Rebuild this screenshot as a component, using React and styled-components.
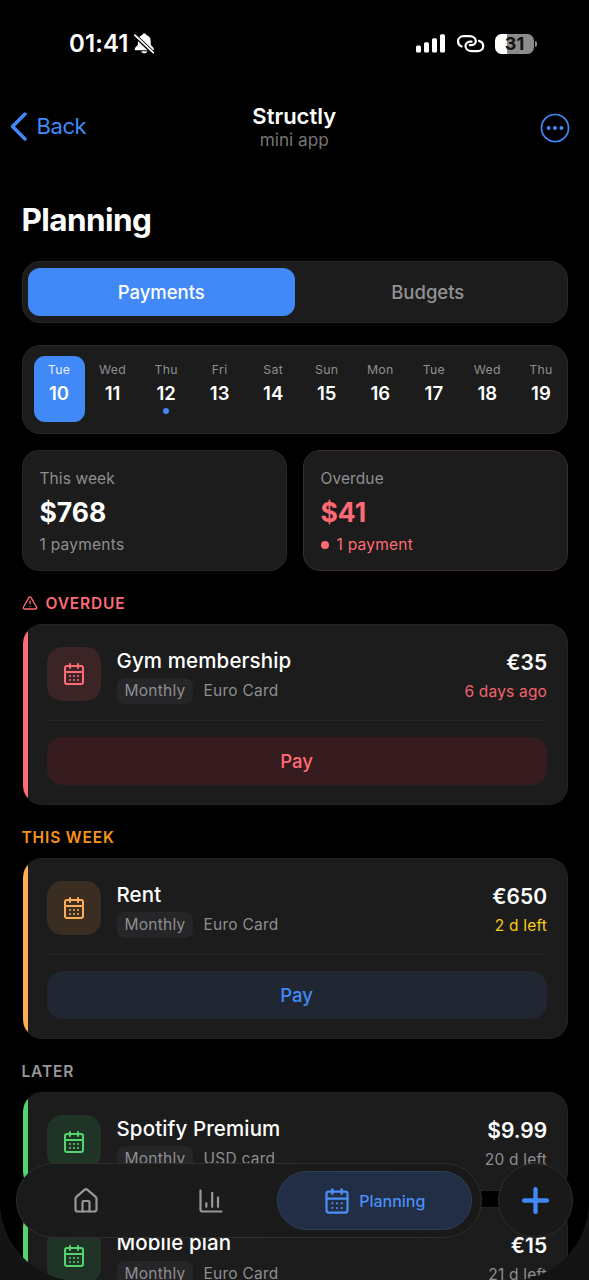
import React from 'react'
import styled, { createGlobalStyle } from 'styled-components'
import { CalendarDays, ChartColumn, House, Plus, TriangleAlert } from 'lucide-react'

const days = [
  { name: 'Tue', num: 10, active: true },
  { name: 'Wed', num: 11 },
  { name: 'Thu', num: 12, dot: true },
  { name: 'Fri', num: 13 },
  { name: 'Sat', num: 14 },
  { name: 'Sun', num: 15 },
  { name: 'Mon', num: 16 },
  { name: 'Tue', num: 17 },
  { name: 'Wed', num: 18 },
  { name: 'Thu', num: 19 },
]

const red = '#ff6b74'
const orange = '#ffad55'
const green = '#55d36d'
const blue = '#4189f7'

function Payment({ name, card, amount, due, color, tile, dueColor, pay, payBg }) {
  return (
    <Card $color={color}>
      <CardTop $short={!!pay}>
        <Tile $bg={tile} $color={color}>
          <CalendarDays size={24} strokeWidth={2} />
        </Tile>
        <Info>
          <Name>{name}</Name>
          <Meta>
            <Badge>Monthly</Badge>
            <CardName>{card}</CardName>
          </Meta>
        </Info>
        <Right>
          <Amount>{amount}</Amount>
          <Due $color={dueColor}>{due}</Due>
        </Right>
      </CardTop>
      {pay && (
        <CardBottom>
          <PayButton $color={pay} $bg={payBg}>Pay</PayButton>
        </CardBottom>
      )}
    </Card>
  )
}

function StatusBar() {
  return (
    <Status>
      <Clock>
        <Time>01:41</Time>
        <svg width="21" height="21" viewBox="0 0 21 21">
          <path d="M10.300 .4c-1.100 0-1.900.7-2.100 1.600C5.400 2.900 3.900 5.100 3.900 8v3.200c0 1.500-3.200 3-3.200 5 0 .7.4 1 1.100 1h17c.7 0 1.100-.3 1.100-1 0-2-3.200-3.500-3.200-5V8c0-2.900-1.500-5.100-4.300-6-.2-.9-1-1.600-2.100-1.600z" fill="#fff" />
          <path d="M7.300 18.200h6c-.3 1.300-1.400 2.100-3 2.100S7.600 19.500 7.300 18.200z" fill="#fff" />
          <path d="M0 1.600L19.400 20.200" stroke="#000" strokeWidth="4" />
          <path d="M.9 2.200L19.300 19.700" stroke="#fff" strokeWidth="1.800" strokeLinecap="round" />
        </svg>
      </Clock>
      <StatusRight>
        <svg width="30" height="19" viewBox="0 0 30 19" fill="#fff">
          <rect x="0" y="11.500" width="5" height="7" rx="1.500" />
          <rect x="8" y="8.300" width="5" height="10.200" rx="1.500" />
          <rect x="16" y="4.300" width="5" height="14.200" rx="1.500" />
          <rect x="24" y=".3" width="5" height="18.200" rx="1.500" />
        </svg>
        <svg width="28" height="19" viewBox="0 0 28 19" fill="none" stroke="#fff" strokeWidth="2.200" strokeLinecap="round">
          <path d="M4.600 12.400C2.300 11.500 1 9.700 1 7.500 1 4.400 3.400 2.200 6.600 2.200h5.900c3.700 0 6.300 2.200 6.300 4.900 0 2.400-1.900 4.100-4.200 4.100h-1.800" />
          <path d="M22 6.900c2.700.8 4.200 2.800 4.200 5 0 3.200-2.400 5.200-5.500 5.200h-5.900c-3.600 0-6.300-2.100-6.300-5 0-2.500 2-4.400 4.500-4.400h1.600" />
        </svg>
        <Battery>
          <BatteryBody>31</BatteryBody>
          <BatteryTip />
        </Battery>
      </StatusRight>
    </Status>
  )
}

function App() {
  return (
    <Screen>
      <GlobalStyle />
      <StatusBar />

      <Header>
        <Back>
          <svg width="18" height="29" viewBox="0 0 18 29" fill="none" stroke={blue} strokeWidth="3.500" strokeLinecap="round" strokeLinejoin="round">
            <path d="M15 2L2.500 14.500 15 27" />
          </svg>
          Back
        </Back>
        <HeaderTitle>
          <AppName>Structly</AppName>
          <AppSub>mini app</AppSub>
        </HeaderTitle>
        <More>
          <svg width="30" height="30" viewBox="0 0 30 30" fill={blue}>
            <circle cx="15" cy="15" r="13.500" fill="none" stroke={blue} strokeWidth="1.700" />
            <circle cx="8.600" cy="15" r="2" />
            <circle cx="15" cy="15" r="2" />
            <circle cx="21.400" cy="15" r="2" />
          </svg>
        </More>
      </Header>

      <Content>
        <Title>Planning</Title>

        <Tabs>
          <Tab $active>Payments</Tab>
          <Tab>Budgets</Tab>
        </Tabs>

        <Strip>
          {days.map((d) => (
            <Day key={d.num} $active={d.active}>
              <DayName $active={d.active}>{d.name}</DayName>
              <DayNum>{d.num}</DayNum>
              {d.dot && <DayDot />}
            </Day>
          ))}
        </Strip>

        <Summary>
          <Box>
            <BoxLabel>This week</BoxLabel>
            <BoxValue>$768</BoxValue>
            <BoxNote>1 payments</BoxNote>
          </Box>
          <Box $danger>
            <BoxLabel>Overdue</BoxLabel>
            <BoxValue $danger>$41</BoxValue>
            <BoxNote $danger><Dot />1 payment</BoxNote>
          </Box>
        </Summary>

        <Section $color={red}>
          <TriangleAlert size={16} strokeWidth={2} />
          OVERDUE
        </Section>
        <Payment name="Gym membership" card="Euro Card" amount="€35" due="6 days ago"
          color={red} tile="#3a2425" dueColor="#f5626c" pay={red} payBg="#371c1f" />

        <Section $color="#f7931e">THIS WEEK</Section>
        <Payment name="Rent" card="Euro Card" amount="€650" due="2 d left"
          color={orange} tile="#3a2d22" dueColor="#f9cc16" pay={blue} payBg="#202733" />

        <Section $color="#98989b">LATER</Section>
        <List>
          <Payment name="Spotify Premium" card="USD card" amount="$9.99" due="20 d left"
            color={green} tile="#203327" dueColor="#8e8e90" />
          <Payment name="Mobile plan" card="Euro Card" amount="€15" due="21 d left"
            color={green} tile="#203327" dueColor="#8e8e90" />
        </List>
      </Content>

      <Corners>
        <svg width="589" height="80" viewBox="0 0 589 80" fill="#141414">
          <path d="M0 2A80 80 0 0 0 66 80H0z" />
          <path d="M589 2A80 80 0 0 1 523 80H589z" />
        </svg>
      </Corners>

      <BottomBar>
        <Nav>
          <NavItem><House size={28} strokeWidth={1.9} /></NavItem>
          <NavItem><ChartColumn size={28} strokeWidth={1.9} /></NavItem>
          <NavItem $active>
            <CalendarDays size={28} strokeWidth={1.9} />
            Planning
          </NavItem>
        </Nav>
        <Fab><Plus size={39} strokeWidth={2.700} /></Fab>
      </BottomBar>
    </Screen>
  )
}

export default App


const GlobalStyle = createGlobalStyle`
* {
  box-sizing: border-box;
}

body {
  margin: 0;
  background: #000;
  font-family: Inter, "Liberation Sans", sans-serif;
}

button {
  border: 0;
  padding: 0;
  background: none;
  font-family: inherit;
}
`

const Screen = styled.div`
position: relative;
width: 589px;
height: 1280px;
overflow: hidden;
background: #000;
color: #fff;
white-space: nowrap;
`

const Status = styled.div`
height: 88px;
padding: 0 52px 1px 69px;
display: flex;
align-items: center;
justify-content: space-between;
`

const Clock = styled.div`
display: flex;
align-items: center;
gap: 4px;
`

const Time = styled.div`
width: 60.5px;
font-size: 24px;
font-weight: 600;
letter-spacing: 0.1px;
`

const StatusRight = styled.div`
display: flex;
align-items: center;
gap: 10.5px;
`

const Battery = styled.div`
display: flex;
align-items: center;
gap: 1px;
`

const BatteryBody = styled.div`
width: 39px;
height: 20px;
border-radius: 6.5px;
background: linear-gradient(to right, #fff 12px, #8b8b8b 12px);
color: #111;
font-size: 18px;
font-weight: 700;
line-height: 20.5px;
text-align: center;
`

const BatteryTip = styled.div`
width: 2px;
height: 6px;
border-radius: 0 3px 3px 0;
background: #8b8b8b;
`

const Header = styled.div`
height: 88px;
padding: 0 19px 12px 10px;
display: grid;
grid-template-columns: 1fr auto 1fr;
align-items: center;
`

const Back = styled.button`
display: flex;
align-items: center;
gap: 8.5px;
color: ${blue};
font-size: 22px;
letter-spacing: -0.4px;
`

const HeaderTitle = styled.div`
padding: 3px 0 0 8.5px;
text-align: center;
`

const AppName = styled.div`
font-size: 22px;
font-weight: 600;
line-height: 25px;
`

const AppSub = styled.div`
color: #757575;
font-size: 17.2px;
line-height: 22px;
`

const More = styled.button`
justify-self: end;
height: 30px;
padding-top: 2px;
`

const Content = styled.div`
padding: 0 21.5px;
`

const Title = styled.h1`
margin: 0;
height: 85px;
padding-top: 24px;
font-size: 31.5px;
font-weight: 700;
line-height: 40px;
letter-spacing: -0.6px;
`

const Tabs = styled.div`
height: 62px;
padding: 6px 5.5px;
display: grid;
grid-template-columns: 1fr 1fr;
border: 1px solid #282829;
border-radius: 18px;
background: #1c1c1c;
`

const Tab = styled.button`
border-radius: 12px;
background: ${(p) => (p.$active ? blue : 'transparent')};
color: ${(p) => (p.$active ? '#fff' : '#929294')};
font-size: 18.5px;
font-weight: 500;
`

const Strip = styled.div`
height: 89px;
margin-top: 22px;
padding: 10px 11px;
display: flex;
gap: 2.55px;
overflow: hidden;
border: 1px solid #282829;
border-radius: 18px;
background: #1c1c1c;
`

const Day = styled.div`
flex: 0 0 51px;
height: 66px;
padding-top: 6px;
display: flex;
flex-direction: column;
align-items: center;
border-radius: 11px;
background: ${(p) => (p.$active ? blue : 'transparent')};
`

const DayName = styled.div`
color: ${(p) => (p.$active ? '#e6effe' : '#8e8e90')};
font-size: 12.3px;
line-height: 16px;
letter-spacing: 0.3px;
`

const DayNum = styled.div`
margin-top: 3px;
font-size: 18.5px;
font-weight: 600;
line-height: 24px;
`

const DayDot = styled.div`
width: 6px;
height: 6px;
margin-top: 3px;
border-radius: 50%;
background: ${blue};
`

const Summary = styled.div`
margin-top: 16px;
display: grid;
grid-template-columns: 1fr 1fr;
gap: 16px;
`

const Box = styled.div`
height: 121px;
padding: 18px 17px 0;
border: 1px solid ${(p) => (p.$danger ? '#3d2a2b' : '#282829')};
border-radius: 17px;
background: #1c1c1c;
`

const BoxLabel = styled.div`
color: #8e8e90;
font-size: 15.5px;
line-height: 20px;
letter-spacing: 0.1px;
`

const BoxValue = styled.div`
margin-top: 7px;
color: ${(p) => (p.$danger ? red : '#fff')};
font-size: 26.5px;
font-weight: 700;
line-height: 32px;
`

const BoxNote = styled.div`
margin-top: 6.6px;
display: flex;
align-items: center;
color: ${(p) => (p.$danger ? red : '#8e8e90')};
font-size: 15.5px;
line-height: 20px;
letter-spacing: 0.25px;
`

const Dot = styled.span`
width: 8px;
height: 8px;
margin-right: 8px;
border-radius: 50%;
background: ${red};
`

const Section = styled.div`
height: 53.4px;
padding-top: 11px;
display: flex;
align-items: center;
gap: 8px;
color: ${(p) => p.$color};
font-size: 15.5px;
font-weight: 600;
letter-spacing: 0.85px;
`

const Card = styled.div`
padding: 0 20px 0 19px;
overflow: hidden;
border: 1px solid #232324;
border-left: 0;
border-radius: 19px;
margin-left: 1px;
background: linear-gradient(to right, ${(p) => p.$color} 5.5px, #1c1c1c 5.5px);
`

const CardTop = styled.div`
height: ${(p) => (p.$short ? '95px' : '97px')};
padding-left: 5px;
display: flex;
align-items: flex-start;
`

const Tile = styled.div`
width: 54px;
height: 54px;
margin-top: 21.5px;
display: flex;
align-items: center;
justify-content: center;
border-radius: 15px;
background: ${(p) => p.$bg};
color: ${(p) => p.$color};
`

const Info = styled.div`
flex: 1;
margin-top: 22.4px;
margin-left: 16px;
`

const Name = styled.div`
font-size: 20.5px;
font-weight: 500;
line-height: 26px;
letter-spacing: 0.12px;
`

const Meta = styled.div`
margin-top: 4.6px;
display: flex;
align-items: center;
gap: 10px;
color: #8e8e90;
font-size: 15.5px;
letter-spacing: 0.25px;
`

const Badge = styled.div`
height: 26px;
padding: 0 8px;
border-radius: 8px;
background: #262628;
line-height: 26px;
`

const CardName = styled.div`
line-height: 26px;
`

const Right = styled.div`
margin-top: 24px;
margin-right: -0.6px;
text-align: right;
`

const Amount = styled.div`
font-size: 21px;
font-weight: 600;
line-height: 28px;
`

const Due = styled.div`
margin-top: 5px;
color: ${(p) => p.$color};
font-size: 15.5px;
line-height: 20px;
letter-spacing: 0.2px;
`

const CardBottom = styled.div`
height: 83.6px;
margin-left: 5px;
padding-top: 16px;
border-top: 1px solid #252526;
`

const PayButton = styled.button`
width: 100%;
height: 48px;
border-radius: 16px;
background: ${(p) => p.$bg};
color: ${(p) => p.$color};
font-size: 18.5px;
font-weight: 500;
`

const List = styled.div`
display: flex;
flex-direction: column;
gap: 15.3px;
`

const Corners = styled.div`
position: absolute;
left: 0;
bottom: 0;
height: 80px;
`

const BottomBar = styled.div`
position: absolute;
left: 16px;
right: 16px;
bottom: 42px;
display: flex;
justify-content: space-between;
`

const Nav = styled.div`
width: 466px;
height: 75px;
padding: 7px 9px 7px 8px;
display: grid;
grid-template-columns: 125px 125.5px 1fr;
border: 1px solid #2e2e2e;
border-radius: 38px;
background: linear-gradient(to right, #191b1a, #1b1b1b 50%, #191919);
`

const NavItem = styled.button`
margin-left: ${(p) => (p.$active ? '1px' : '-3px')};
display: flex;
align-items: center;
justify-content: center;
gap: 8px;
border: ${(p) => (p.$active ? '1px solid #2f3f59' : '0')};
border-radius: 30px;
background: ${(p) => (p.$active ? '#212e45' : 'transparent')};
color: ${(p) => (p.$active ? '#4c8ff5' : '#98989a')};
font-size: 16px;
font-weight: 500;
`

const Fab = styled.button`
width: 75px;
height: 75px;
display: flex;
align-items: center;
justify-content: center;
border: 1px solid #2d2d2d;
border-radius: 50%;
background: #191919;
color: ${blue};
`
